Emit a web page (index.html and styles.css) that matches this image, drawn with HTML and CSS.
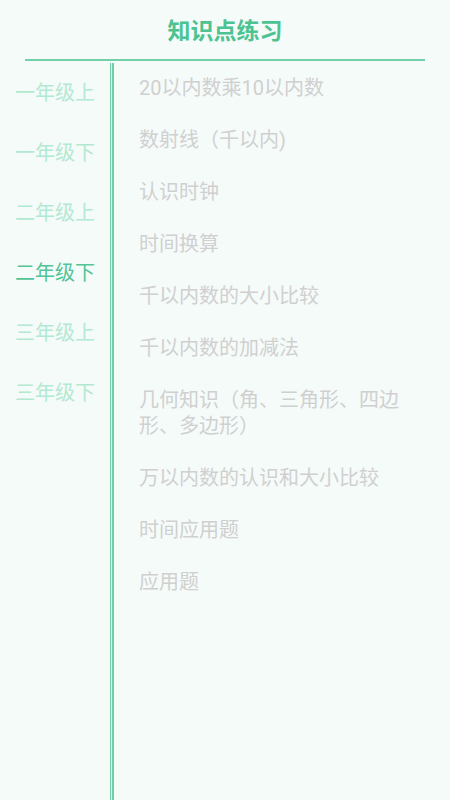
FILE: index.html
```html
<!DOCTYPE html>
<html lang="zh">
<head>
<meta charset="utf-8">
<link rel="stylesheet" href="styles.css">
</head>
<body>
<div class="page">
  <header class="header">
    <h1 class="title">知识点练习</h1>
  </header>
  <div class="rule"></div>
  <div class="content">
    <nav class="grades">
      <div class="grade">一年级上</div>
      <div class="grade">一年级下</div>
      <div class="grade">二年级上</div>
      <div class="grade active">二年级下</div>
      <div class="grade">三年级上</div>
      <div class="grade">三年级下</div>
    </nav>
    <div class="divider"></div>
    <ul class="topics">
      <li class="topic">20以内数乘10以内数</li>
      <li class="topic">数射线（千以内)</li>
      <li class="topic">认识时钟</li>
      <li class="topic">时间换算</li>
      <li class="topic">千以内数的大小比较</li>
      <li class="topic">千以内数的加减法</li>
      <li class="topic">几何知识（角、三角形、四边形、多边形）</li>
      <li class="topic">万以内数的认识和大小比较</li>
      <li class="topic">时间应用题</li>
      <li class="topic">应用题</li>
    </ul>
  </div>
</div>
</body>
</html>
```

FILE: styles.css
```css
* { box-sizing: border-box; }
html, body {
  margin: 0;
  padding: 0;
  background: #f5fbf9;
}
body {
  font-family: Roboto, "Noto Sans CJK SC", sans-serif;
}
.page {
  width: 450px;
  height: 800px;
  display: flex;
  flex-direction: column;
  overflow: hidden;
}
.header {
  height: 59px;
  display: flex;
  align-items: center;
  justify-content: center;
  padding-top: 3px;
}
.title {
  margin: 0;
  font-size: 23px;
  font-weight: bold;
  color: #4cc391;
  line-height: 1;
}
.rule {
  height: 2px;
  margin: 0 25px;
  background: #74d0aa;
}
.content {
  flex: 1;
  display: flex;
}
.grades {
  width: 110px;
  display: flex;
  flex-direction: column;
  padding-top: 2px;
}
.grade {
  height: 60px;
  display: flex;
  align-items: center;
  justify-content: center;
  font-size: 20px;
  line-height: 24px;
  color: #b3e9d2;
}
.grade.active {
  color: #52c496;
}
.divider {
  width: 4px;
  margin-top: 2px;
  border-left: 1px solid #6fcfa7;
  border-right: 2px solid #6fcfa7;
  background: #e4f6ee;
}
.topics {
  flex: 1;
  list-style: none;
  margin: 0;
  padding: 1px 36px 0 25px;
}
.topic {
  padding: 13px 0;
  font-size: 20px;
  line-height: 26px;
  color: #d0d0d0;
}
```
